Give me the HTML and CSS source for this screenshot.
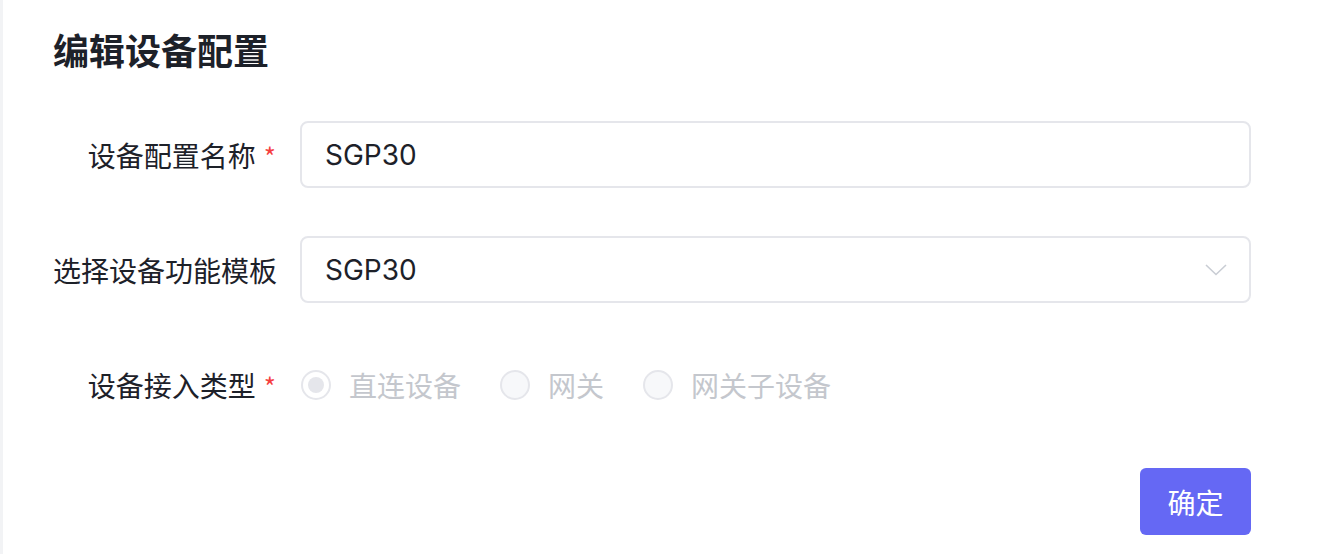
FILE: index.html
```html
<!DOCTYPE html>
<html lang="zh-CN">
<head>
    <meta charset="UTF-8">
    <meta name="viewport" content="width=device-width, initial-scale=1.0">
    <title>编辑设备配置</title>
    <link rel="stylesheet" href="styles.css">
</head>
<body>
    <div class="panel">
        <h1 class="title">编辑设备配置</h1>
        <form class="form">
            <div class="row">
                <label class="label">设备配置名称<span class="req">*</span></label>
                <div class="field">
                    <input class="input" type="text" value="SGP30">
                </div>
            </div>
            <div class="row">
                <label class="label">选择设备功能模板</label>
                <div class="field select">
                    <span class="select-value">SGP30</span>
                    <svg class="arrow" width="22" height="12" viewBox="0 0 22 12">
                        <path d="M1 1 L11 10.5 L21 1" fill="none" stroke="#c9cdd4" stroke-width="1.6"/>
                    </svg>
                </div>
            </div>
            <div class="row">
                <label class="label">设备接入类型<span class="req">*</span></label>
                <div class="radios">
                    <span class="radio checked"><i class="dot"></i>直连设备</span>
                    <span class="radio"><i class="dot"></i>网关</span>
                    <span class="radio"><i class="dot"></i>网关子设备</span>
                </div>
            </div>
            <div class="actions">
                <button type="button" class="btn">确定</button>
            </div>
        </form>
    </div>
</body>
</html>
```

FILE: styles.css
```css
*{
    box-sizing: border-box;
}
body{
    margin: 0;
    background-color: #ffffff;
    font-family: "Inter", "Noto Sans CJK SC", sans-serif;
    color: #1d2129;
}
.panel{
    height: 554px;
    border-left: 3px solid #f2f3f5;
    padding: 22px 0 0 50px;
}
.title{
    margin: 0;
    font-size: 36px;
    line-height: 54px;
    font-weight: 700;
    font-family: "Noto Sans CJK SC", sans-serif;
    color: #1d2129;
}
.form{
    margin-top: 45px;
    width: 1198px;
}
.row{
    display: grid;
    grid-template-columns: 223px 951px;
    column-gap: 24px;
    align-items: center;
    height: 67px;
    margin-bottom: 48px;
}
.label{
    text-align: right;
    font-size: 28px;
    font-family: "Noto Sans CJK SC", sans-serif;
    color: #1d2129;
    white-space: nowrap;
}
.req{
    color: #f53f3f;
    margin-left: 8px;
    font-size: 26px;
}
.field{
    height: 67px;
    border: 2px solid #e5e6eb;
    border-radius: 8px;
    display: flex;
    align-items: center;
    padding: 0 22px 0 23px;
}
.input{
    width: 100%;
    border: none;
    outline: none;
    padding: 0;
    font-family: inherit;
    font-size: 28px;
    color: #1d2129;
    background: transparent;
}
.select{
    justify-content: space-between;
}
.select-value{
    font-size: 28px;
    color: #1d2129;
}
.radios{
    display: flex;
    align-items: center;
    gap: 39px;
    padding-left: 1px;
}
.radio{
    display: flex;
    align-items: center;
    gap: 18px;
    font-size: 28px;
    font-family: "Noto Sans CJK SC", sans-serif;
    color: #c4c7cd;
}
.dot{
    width: 30px;
    height: 30px;
    border: 2px solid #e5e6eb;
    border-radius: 50%;
    background-color: #f7f8fa;
    display: flex;
    align-items: center;
    justify-content: center;
}
.checked .dot{
    background-color: #ffffff;
}
.checked .dot::after{
    content: "";
    width: 16px;
    height: 16px;
    border-radius: 50%;
    background-color: #e5e6eb;
}
.actions{
    display: flex;
    justify-content: flex-end;
    padding-top: 2px;
}
.btn{
    width: 111px;
    height: 67px;
    border: none;
    border-radius: 6px;
    background-color: #6568f4;
    color: #ffffff;
    font-size: 28px;
    font-family: "Noto Sans CJK SC", sans-serif;
}
```
